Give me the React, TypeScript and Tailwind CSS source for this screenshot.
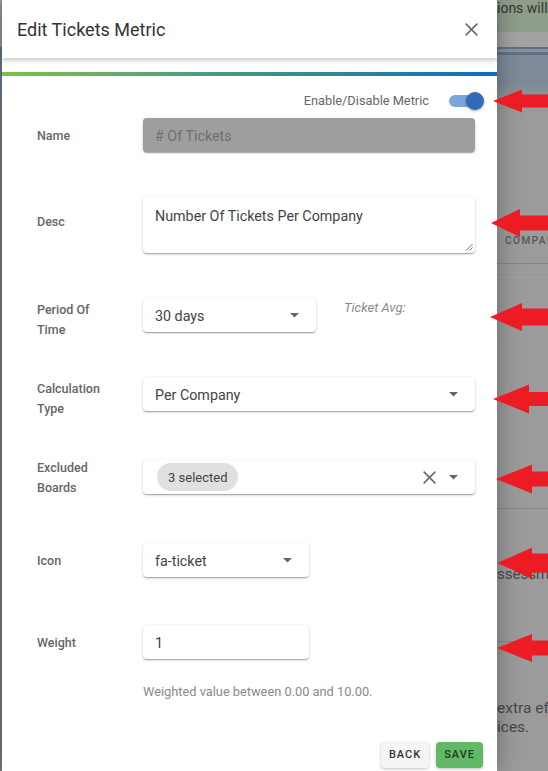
import React from 'react';

const fieldShadow =
  'shadow-[0_1px_3px_rgba(0,0,0,0.2),0_1px_1px_rgba(0,0,0,0.14),0_2px_1px_-1px_rgba(0,0,0,0.12)]';

type Arrow = { tip: number; cy: number; base: number; head: number; shaft: number };

const arrows: Arrow[] = [
  { tip: 493, cy: 101, base: 522, head: 23, shaft: 13 },
  { tip: 491, cy: 223, base: 520, head: 28, shaft: 15 },
  { tip: 490, cy: 317, base: 522, head: 28, shaft: 17 },
  { tip: 493, cy: 399, base: 529, head: 29, shaft: 14 },
  { tip: 496, cy: 479, base: 532, head: 29, shaft: 15 },
  { tip: 497, cy: 563, base: 532, head: 31, shaft: 19 },
  { tip: 497, cy: 648, base: 532, head: 28, shaft: 15 },
];

function arrowPoints(a: Arrow) {
  const h = a.head / 2;
  const s = a.shaft / 2;
  return `${a.tip},${a.cy} ${a.base},${a.cy - h} ${a.base},${a.cy - s} 550,${a.cy - s} 550,${a.cy + s} ${a.base},${a.cy + s} ${a.base},${a.cy + h}`;
}

function Caret() {
  return (
    <svg width="9" height="5" viewBox="0 0 9 5" className="shrink-0">
      <path d="M0 0h9L4.5 4.5z" fill="#666" />
    </svg>
  );
}

function Cross({ size }: { size: number }) {
  return (
    <svg width={size} height={size} viewBox="0 0 12 12" className="shrink-0">
      <path d="M0.6 0.6L11.4 11.4M11.4 0.6L0.6 11.4" stroke="#666" strokeWidth="1.4" fill="none" />
    </svg>
  );
}

function Label({ children, className }: { children: React.ReactNode; className: string }) {
  return (
    <div className={'w-[106px] shrink-0 ' + className}>
      <div className="max-w-[72px] text-[12.5px] font-medium leading-[20px] text-[#666]">{children}</div>
    </div>
  );
}

function Select({ value, className }: { value: string; className: string }) {
  return (
    <div
      className={
        'flex h-[34px] items-center justify-between rounded-[4px] bg-white pl-[12px] pr-[17px] text-[14.3px] text-[#444] ' +
        fieldShadow +
        ' ' +
        className
      }
    >
      <span className="pt-[3px]">{value}</span>
      <Caret />
    </div>
  );
}

function Backdrop() {
  return (
    <div className="flex flex-1 flex-col overflow-hidden bg-[#9b9b9b] text-[#474747]">
      <div className="h-[32px] shrink-0 overflow-hidden whitespace-nowrap bg-[#8f9d8b] text-[14px] leading-[16px] text-[#2f382f]">
        ions will
      </div>
      <div className="h-[15px] shrink-0 bg-[#a3a3a3]" />
      <div className="h-[2px] shrink-0 bg-[#65717f]" />
      <div className="h-[3px] shrink-0 bg-[#8593a3]" />
      <div className="h-[3px] shrink-0 bg-[#65717f]" />
      <div className="h-[55px] shrink-0 bg-linear-to-b from-[#7c8a9b] via-[#7e8a98] to-[#9b9b9b]" />
      <div className="mt-[124px] h-[14px] shrink-0 overflow-hidden whitespace-nowrap pl-[8px] text-[10px] font-medium leading-[14px] tracking-[1.5px] text-[#555]">
        COMPANY
      </div>
      <div className="mt-[15px] h-px shrink-0 bg-[#858585]" />
      <div className="mt-[13px] h-px shrink-0 bg-[#a2a2a2]" />
      <div className="mt-[230px] h-px shrink-0 bg-[#888]" />
      <div className="mt-[55px] h-[20px] shrink-0 overflow-hidden whitespace-nowrap text-[15px] leading-[20px]">
        ssessment
      </div>
      <div className="mt-[57px] h-px shrink-0 bg-[#888]" />
      <div className="mt-[57px] overflow-hidden whitespace-nowrap text-[15.5px] leading-[19px]">
        <div>extra effort</div>
        <div>ices.</div>
      </div>
    </div>
  );
}

export default function App() {
  return (
    <div className="relative flex h-[771px] w-[548px] overflow-hidden bg-[#9b9b9b] font-[Roboto,sans-serif]">
      <div className="flex w-[2px] shrink-0 flex-col bg-[#7b7b7b]">
        <div className="h-[47px] bg-[#9aa398]" />
        <div className="h-[60px] bg-[#6e7c8c]" />
      </div>

      <div className="relative z-10 flex h-full w-[495px] shrink-0 flex-col bg-white shadow-[0_0_22px_rgba(0,0,0,0.35)]">
        <header className="relative z-10 flex h-[58px] shrink-0 items-center justify-between bg-white pl-[15px] pr-[19px] shadow-[0_3px_4px_rgba(0,0,0,0.18)]">
          <h1 className="pt-[1px] text-[18px] leading-[24px] text-[#333]">Edit Tickets Metric</h1>
          <Cross size={13} />
        </header>

        <div className="mt-[14px] h-[4px] shrink-0 bg-linear-to-r from-[#7dc242] via-[#3f9484] to-[#0b6dbd]" />

        <div className="flex flex-col pl-[35px] pr-[22px]">
          <div className="mt-[15px] flex h-[20px] items-center justify-end">
            <span className="text-[12.8px] text-[#666]">Enable/Disable Metric</span>
            <div className="relative -mr-[4px] ml-[20px] h-[12px] w-[30px] rounded-full bg-[#7ea5d8]">
              <div className="absolute -right-[5px] -top-[3px] h-[18px] w-[18px] rounded-full bg-[#2e6cb6] shadow-[0_1px_3px_rgba(0,0,0,0.35)]" />
            </div>
          </div>

          <div className="mt-[7px] flex items-start">
            <Label className="mt-[8px]">Name</Label>
            <div
              className={
                'flex h-[34px] flex-1 items-center rounded-[4px] bg-[#9e9e9e] pl-[12px] pt-[3px] text-[14.3px] text-[#6f6f6f] ' +
                fieldShadow
              }
            >
              # Of Tickets
            </div>
          </div>

          <div className="mt-[45px] flex items-start">
            <Label className="mt-[15px]">Desc</Label>
            <div
              className={
                'relative h-[56px] flex-1 rounded-[4px] bg-white pl-[12px] pt-[9px] text-[14.3px] leading-[20px] text-[#444] ' +
                fieldShadow
              }
            >
              Number Of Tickets Per Company
              <svg width="8" height="8" viewBox="0 0 8 8" className="absolute bottom-[2px] right-[2px]">
                <path d="M7.5 1L1 7.5M7.5 4.5L4.5 7.5" stroke="#777" strokeWidth="1" fill="none" />
              </svg>
            </div>
          </div>

          <div className="mt-[45px] flex items-start">
            <Label className="mt-[2px]">Period Of Time</Label>
            <div className="flex flex-1 items-start">
              <Select value="30 days" className="w-[173px]" />
              <span className="ml-[28px] mt-[2px] text-[13px] italic leading-[16px] text-[#8a8a8a]">Ticket Avg:</span>
            </div>
          </div>

          <div className="mt-[37px] flex items-start">
            <Label className="mt-[2px]">Calculation Type</Label>
            <Select value="Per Company" className="flex-1" />
          </div>

          <div className="mt-[41px] flex items-start">
            <Label className="-mt-[2px]">Excluded Boards</Label>
            <div
              className={
                'flex h-[34px] flex-1 items-center rounded-[4px] bg-white pl-[14px] pr-[17px] ' + fieldShadow
              }
            >
              <span className="flex h-[28px] items-center rounded-full bg-[#e0e0e0] px-[11px] pt-[1px] text-[13px] text-[#444]">
                3 selected
              </span>
              <div className="ml-auto mr-[13px] flex">
                <Cross size={13} />
              </div>
              <Caret />
            </div>
          </div>

          <div className="mt-[45px] flex items-start">
            <Label className="mt-[8px]">Icon</Label>
            <Select value="fa-ticket" className="w-[166px]" />
          </div>

          <div className="mt-[48px] flex items-start">
            <Label className="mt-[8px]">Weight</Label>
            <div
              className={
                'flex h-[34px] w-[166px] items-center rounded-[4px] bg-white pl-[12px] pt-[3px] text-[14.3px] text-[#444] ' +
                fieldShadow
              }
            >
              1
            </div>
          </div>

          <p className="ml-[106px] mt-[25px] text-[12.8px] leading-[16px] text-[#8a8a8a]">
            Weighted value between 0.00 and 10.00.
          </p>

          <div className="-mr-[8px] mt-[42px] flex justify-end gap-[7px]">
            <button className="h-[26px] rounded-[4px] bg-[#f5f5f5] px-[8px] text-[11px] font-medium tracking-[1px] text-[#333] shadow-[0_1px_3px_rgba(0,0,0,0.25)]">
              BACK
            </button>
            <button className="h-[26px] rounded-[4px] bg-[#62b867] px-[8px] text-[11px] font-medium tracking-[1px] text-[#1c3a1e] shadow-[0_1px_3px_rgba(0,0,0,0.25)]">
              SAVE
            </button>
          </div>
        </div>
      </div>

      <Backdrop />

      <svg
        className="pointer-events-none absolute left-[470px] top-0 z-20 h-[771px] w-[78px]"
        viewBox="470 0 78 771"
      >
        {arrows.map((a) => (
          <polygon key={a.cy} points={arrowPoints(a)} fill="#ed1c24" />
        ))}
      </svg>
    </div>
  );
}
